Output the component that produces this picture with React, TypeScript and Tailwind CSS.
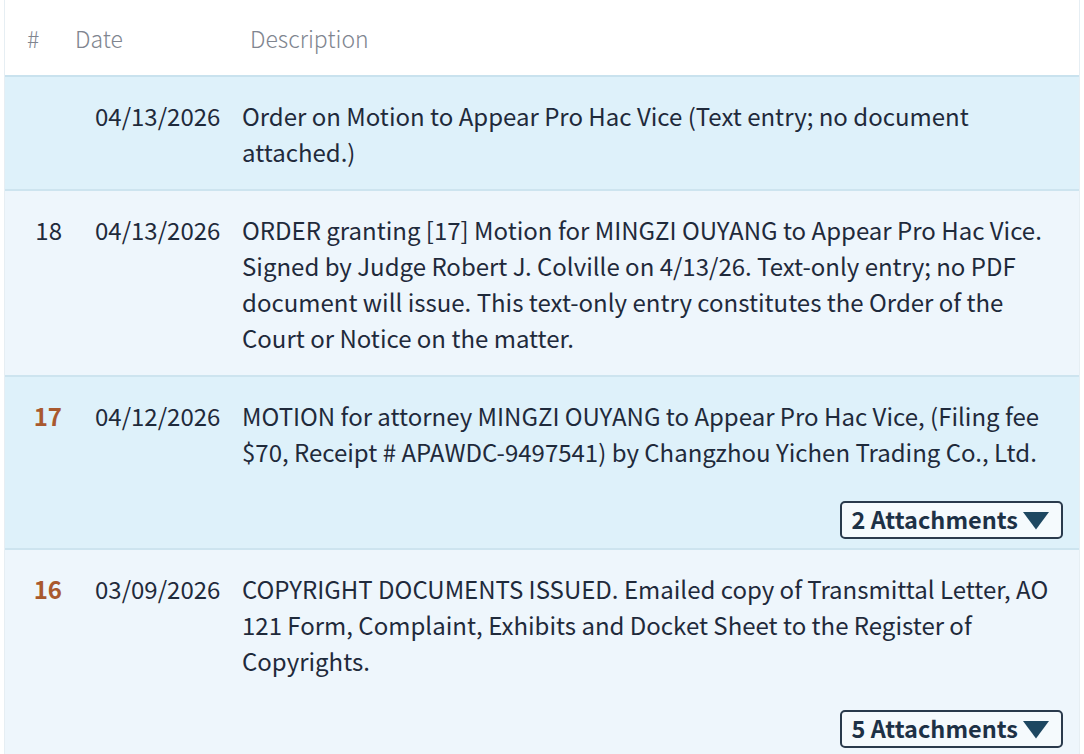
import React from 'react';

interface Entry {
  num?: string;
  numTone?: 'plain' | 'accent';
  date: string;
  lines: string[];
  attachments?: number;
  shade: 'blue' | 'light';
}

const entries: Entry[] = [
  {
    date: '04/13/2026',
    lines: ['Order on Motion to Appear Pro Hac Vice (Text entry; no document', 'attached.)'],
    shade: 'blue',
  },
  {
    num: '18',
    numTone: 'plain',
    date: '04/13/2026',
    lines: [
      'ORDER granting [17] Motion for MINGZI OUYANG to Appear Pro Hac Vice.',
      'Signed by Judge Robert J. Colville on 4/13/26. Text-only entry; no PDF',
      'document will issue. This text-only entry constitutes the Order of the',
      'Court or Notice on the matter.',
    ],
    shade: 'light',
  },
  {
    num: '17',
    numTone: 'accent',
    date: '04/12/2026',
    lines: [
      'MOTION for attorney MINGZI OUYANG to Appear Pro Hac Vice, (Filing fee',
      '$70, Receipt # APAWDC-9497541) by Changzhou Yichen Trading Co., Ltd.',
    ],
    attachments: 2,
    shade: 'blue',
  },
  {
    num: '16',
    numTone: 'accent',
    date: '03/09/2026',
    lines: [
      'COPYRIGHT DOCUMENTS ISSUED. Emailed copy of Transmittal Letter, AO',
      '121 Form, Complaint, Exhibits and Docket Sheet to the Register of',
      'Copyrights.',
    ],
    attachments: 5,
    shade: 'light',
  },
];

function AttachmentButton({ count }: { count: number }) {
  return (
    <button className="flex items-center gap-[4px] h-[38px] pl-[10px] pr-[11px] rounded-[5px] border-2 border-[#2a3a4c] bg-[#f5fafd] text-[23.5px] font-bold text-[#1d3146] leading-none">
      <span>{count} Attachments</span>
      <svg width="28" height="19" viewBox="0 0 28 19" className="mt-[1px]">
        <path d="M1 1 L27 1 L14 18.5 Z" fill="#1d4761" />
      </svg>
    </button>
  );
}

export default function App() {
  return (
    <div className="w-[1084px] h-[754px] overflow-hidden bg-white font-['Noto_Sans_CJK_SC',sans-serif] text-[#1f2a3b]">
      <div className="mx-[4px] border-x border-[#e6eef3]">
        {/* header */}
        <div className="flex items-center h-[77px] pt-[2px] text-[23px] font-light text-[#80858f] border-b-2 border-[#c9e2ee]">
          <div className="w-[57px] pl-[22px]">#</div>
          <div className="w-[175px] pl-[13px]">Date</div>
          <div className="pl-[13px]">Description</div>
        </div>

        {entries.map((e, i) => (
          <div
            key={i}
            className={
              'flex text-[24px] leading-[36px] pt-[21px] border-b-2 border-[#cde4ef] ' +
              (e.shade === 'blue' ? 'bg-[#def1fa] ' : 'bg-[#eef6fc] ') +
              (e.attachments ? 'pb-[9px]' : 'pb-[19px]')
            }
          >
            <div
              className={
                'w-[57px] text-right ' +
                (e.numTone === 'accent' ? 'font-bold text-[#a9592e]' : 'text-[#1f2a3b]')
              }
            >
              {e.num}
            </div>
            <div className="w-[180px] pl-[33px] whitespace-nowrap">{e.date}</div>
            <div className="flex-1 pr-[16px]">
              {e.lines.map((l, j) => (
                <div key={j} className="whitespace-nowrap">
                  {l}
                </div>
              ))}
              {e.attachments && (
                <div className="flex justify-end mt-[31px]">
                  <AttachmentButton count={e.attachments} />
                </div>
              )}
            </div>
          </div>
        ))}
      </div>
    </div>
  );
}
